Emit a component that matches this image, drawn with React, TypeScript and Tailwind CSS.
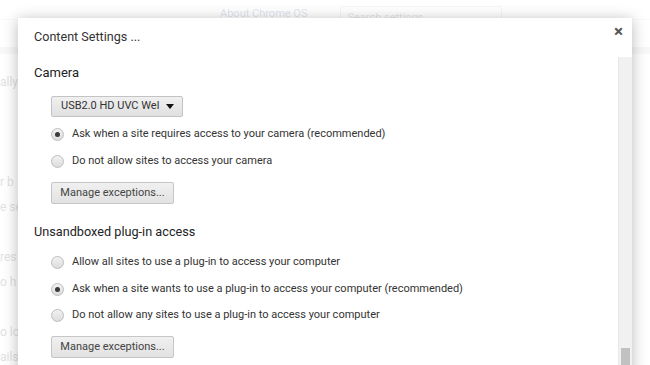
import React from 'react'

function Radio({ checked, label }: { checked?: boolean; label: string }) {
  return (
    <div className="flex items-center h-[20px] ml-[17px]">
      <span className="w-[13px] h-[13px] rounded-full border border-[#bdbdbd] bg-gradient-to-b from-[#f2f2f2] to-[#dcdcdc] flex items-center justify-center shrink-0">
        {checked && <span className="w-[5px] h-[5px] rounded-full bg-[#3a3a3a]" />}
      </span>
      <span className="ml-[8px] text-[11px] leading-[16px] text-[#333]">{label}</span>
    </div>
  )
}

function Button({ label }: { label: string }) {
  return (
    <div className="ml-[17px] w-[123px] h-[22px] rounded-[2px] border border-[#c6c6c6] bg-gradient-to-b from-[#f0f0f0] to-[#e2e2e2] flex items-center justify-center text-[11px] text-[#444]">
      {label}
    </div>
  )
}

export default function App() {
  const faint = ['ally', '', '', '', 'r b', 'e se', '', 'res', 'o h', '', 'o lo', 'ails']

  return (
    <div className="relative w-[650px] h-[365px] overflow-hidden bg-white" style={{ fontFamily: 'Roboto, "Noto Sans", sans-serif' }}>
      {/* page behind the dialog */}
      <div className="absolute inset-0">
        <div className="h-[20px] border-b border-[#eee] flex items-start">
          <span className="ml-[220px] mt-[6px] text-[11px] text-[#9aa7c9]">About Chrome OS</span>
          <span className="ml-[33px] mt-[6px] w-[162px] h-[22px] border border-[#ddd] bg-white text-[11px] text-[#aaa] pl-[6px] pt-[3px]">Search settings</span>
        </div>
        <div className="mt-[27px] h-[7px] bg-[#e6e6e6]" />
        <div className="flex flex-col text-[12px] text-[#999] mt-[18px]">
          {faint.map((t, i) => (
            <div key={i} className="h-[25px] leading-[20px] whitespace-nowrap">{t}</div>
          ))}
        </div>
        <div className="absolute inset-0 bg-white/70" />
      </div>

      {/* dialog */}
      <div className="absolute left-[18px] top-[18px] w-[614px] h-[360px] bg-white shadow-[0_2px_14px_rgba(0,0,0,0.28)] flex flex-col">
        <div className="h-[39px] flex items-start justify-between shrink-0">
          <span className="ml-[16px] mt-[11px] text-[12.6px] leading-[16px] text-[#333]">Content Settings ...</span>
          <span className="mr-[9px] mt-[5px] text-[17px] leading-[16px] font-bold text-[#555]">×</span>
        </div>
        <div className="flex flex-1 min-h-0">
          <div className="flex-1 flex flex-col pl-[16px]">
            <div className="mt-[8px] text-[13px] leading-[16px] text-[#222]">Camera</div>
            <div className="mt-[15px] ml-[17px] w-[132px] h-[21px] rounded-[2px] border border-[#c3c3c3] bg-gradient-to-b from-[#f0f0f0] to-[#e0e0e0] flex items-center pl-[9px] pr-[6px] text-[11px] text-[#333]">
              <span className="flex-1 whitespace-nowrap">USB2.0 HD UVC Wel</span>
              <svg width="8" height="5" viewBox="0 0 8 5" className="mr-[2px]"><path d="M0 0h8L4 5z" fill="#111" /></svg>
            </div>
            <div className="mt-[7px]"><Radio checked label="Ask when a site requires access to your camera (recommended)" /></div>
            <div className="mt-[7px]"><Radio label="Do not allow sites to access your camera" /></div>
            <div className="mt-[11px]"><Button label="Manage exceptions..." /></div>
            <div className="mt-[20px] text-[12.7px] leading-[16px] text-[#222]">Unsandboxed plug-in access</div>
            <div className="mt-[12px]"><Radio label="Allow all sites to use a plug-in to access your computer" /></div>
            <div className="mt-[7px]"><Radio checked label="Ask when a site wants to use a plug-in to access your computer (recommended)" /></div>
            <div className="mt-[6px]"><Radio label="Do not allow any sites to use a plug-in to access your computer" /></div>
            <div className="mt-[11px]"><Button label="Manage exceptions..." /></div>
          </div>
          <div className="w-[14px] bg-[#f1f1f1] border-l border-[#e8e8e8] flex flex-col">
            <div className="mt-[291px] mx-[2px] h-[30px] bg-[#c1c1c1]" />
          </div>
        </div>
      </div>
    </div>
  )
}
